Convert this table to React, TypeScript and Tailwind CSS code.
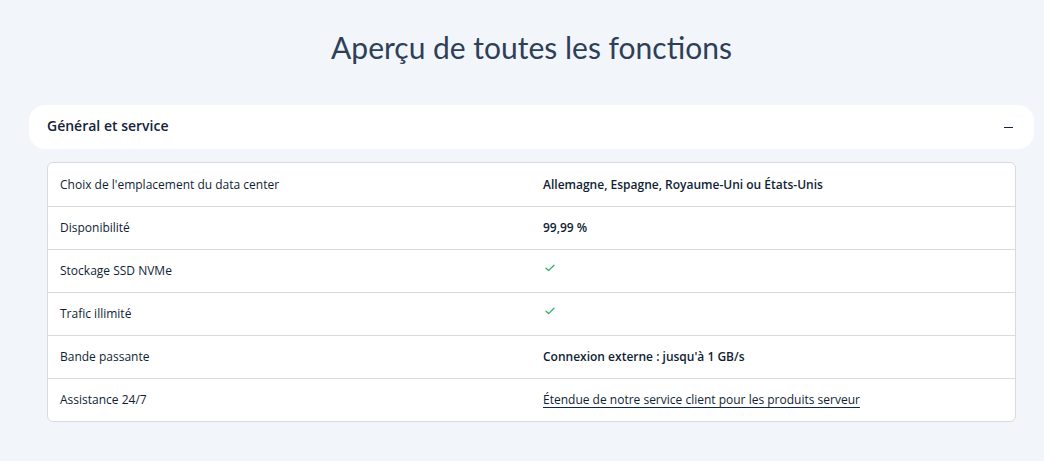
const rows: { label: string; value: React.ReactNode }[] = [
  { label: "Choix de l'emplacement du data center", value: <strong className="font-semibold">Allemagne, Espagne, Royaume-Uni ou États-Unis</strong> },
  { label: "Disponibilité", value: <strong className="font-semibold">99,99 %</strong> },
  { label: "Stockage SSD NVMe", value: <Check /> },
  { label: "Trafic illimité", value: <Check /> },
  { label: "Bande passante", value: <strong className="font-semibold">Connexion externe : jusqu'à 1 GB/s</strong> },
  {
    label: "Assistance 24/7",
    value: (
      <a href="#" className="underline underline-offset-[3px] decoration-[#0b2a4a]">
        Étendue de notre service client pour les produits serveur
      </a>
    ),
  },
];

function Check() {
  return (
    <svg width="10" height="8" viewBox="0 0 10 8" fill="none" className="ml-[2px] -mt-[6px]">
      <path d="M1 4.2 L3.6 6.6 L9 1.2" stroke="#2fb36b" strokeWidth="1.3" strokeLinecap="round" strokeLinejoin="round" />
    </svg>
  );
}

export default function App() {
  return (
    <div className="min-h-[461px] bg-[#f2f5f9] pl-[29px] pr-[10px] pt-[26px] pb-10 text-[#0f1e33]" style={{ fontFamily: "'Open Sans', sans-serif" }}>
      <h1 className="text-center text-[30px] leading-[42px] text-[#2e3f58]" style={{ fontFamily: "Lato, sans-serif" }}>
        Aperçu de toutes les fonctions
      </h1>
      <div className="mt-[37px] flex h-[44px] items-center justify-between rounded-[16px] bg-white pl-[18px] pr-[21px]">
        <span className="-mt-[3px] text-[14px] font-semibold text-[#14233a]">Général et service</span>
        <span className="block h-px w-[9px] bg-[#0b2344]" />
      </div>
      <div className="mt-[13px] mx-[18px] overflow-hidden rounded-[6px] border border-[#d8dadd] bg-white">
        {rows.map((row, i) => (
          <div
            key={i}
            className={`grid h-[43px] grid-cols-[495px_1fr] items-center text-[12px] ${i > 0 ? "border-t border-[#d8dadd]" : ""}`}
          >
            <div className="pl-[12px]">{row.label}</div>
            <div className="flex items-center">{row.value}</div>
          </div>
        ))}
      </div>
    </div>
  );
}
